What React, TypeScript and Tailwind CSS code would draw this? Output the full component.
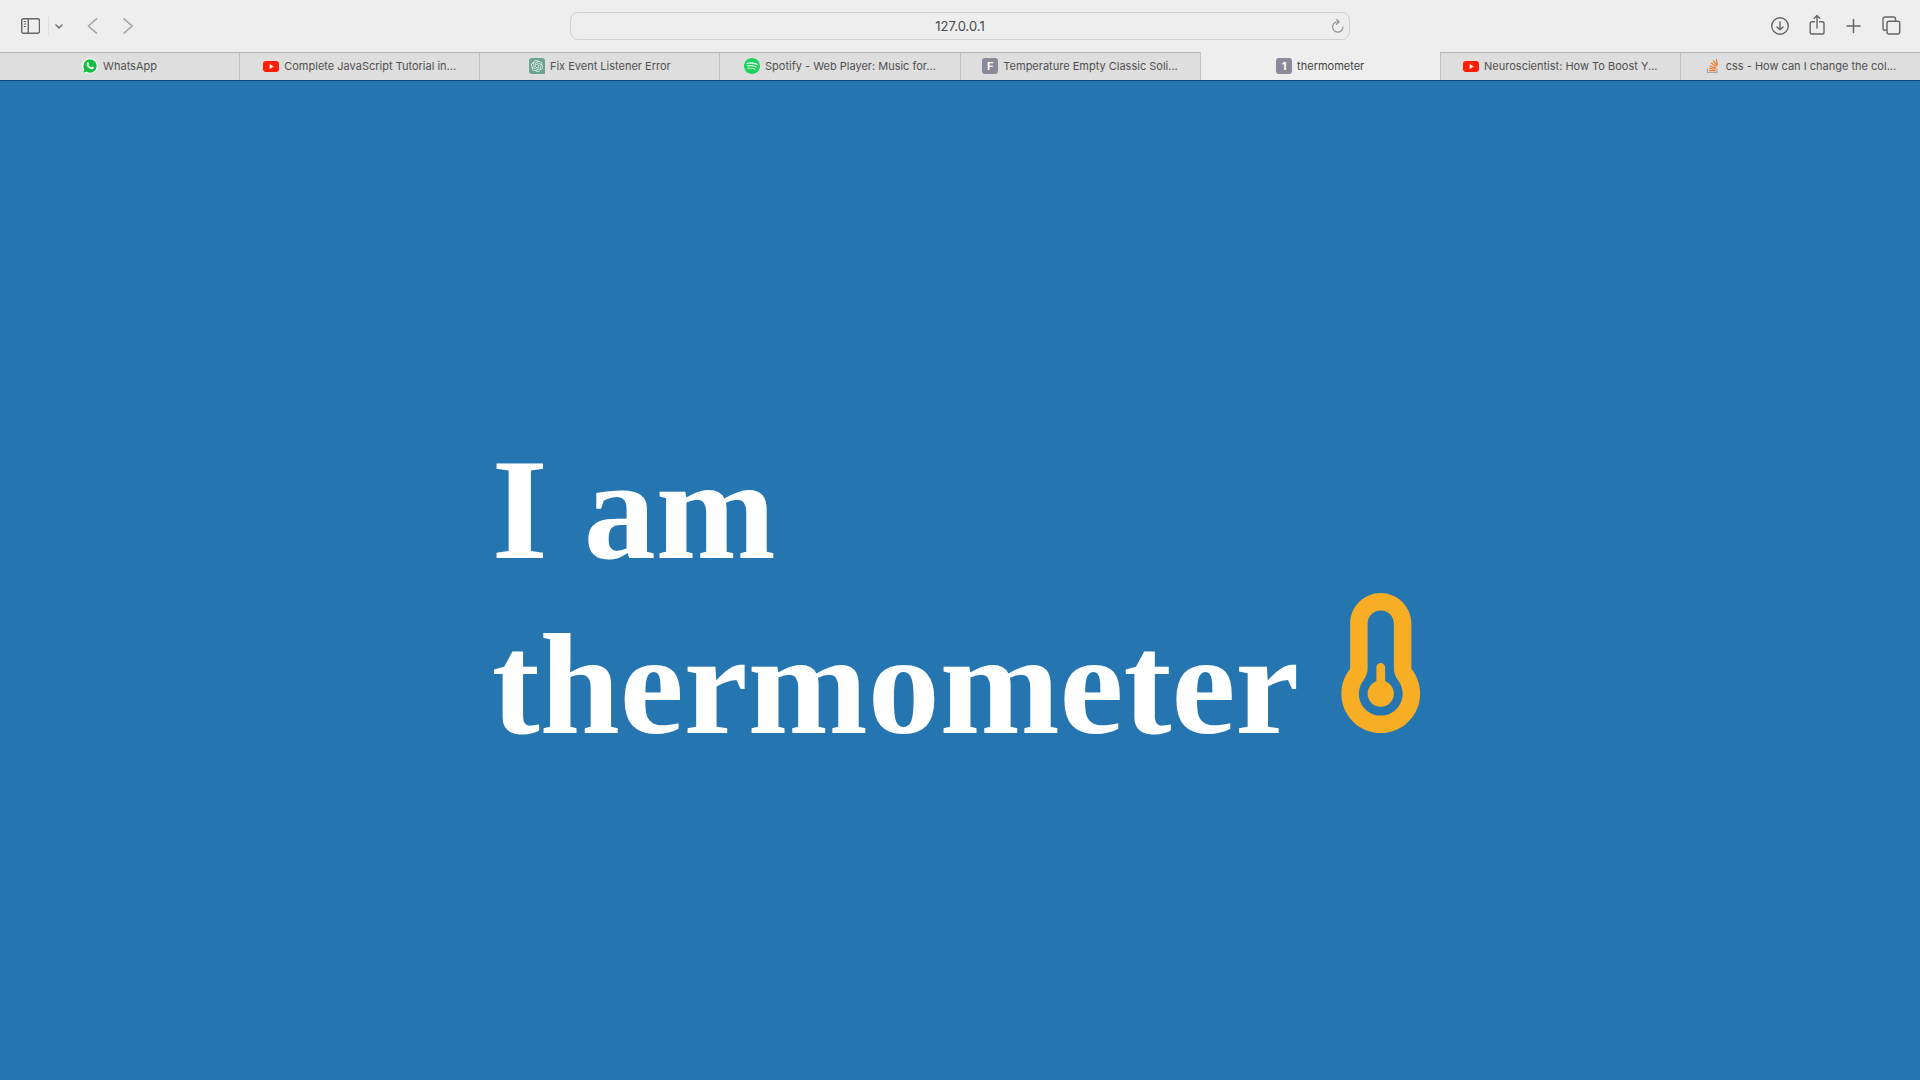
import React from "react";
import { SiOpenai, SiSpotify } from "react-icons/si";

function WhatsAppMark() {
  return (
    <svg viewBox="0 0 16 16" className="size-4" aria-hidden="true">
      <path d="M8 .2a7.600 7.600 0 0 1 0 15.400c-1.300 0-2.600-.3-3.600-.9L.3 15.800l1.100-4A7.600 7.600 0 0 1 8 .2Z" fill="#fff" />
      <circle cx="8" cy="8" r="6.700" fill="#12bd3f" />
      <path d="M1.200 14.800l1-3.600 2.600 2.600z" fill="#12bd3f" />
      <path
        d="M5.400 4.300c.5-.5.9-.4 1.100.1l.5 1.200c.1.4-.5.9-.6 1.200.5 1.200 1.500 2 2.700 2.600.4 0 .8-.9 1.100-.9l1.500.7c.4.3-.1 1.500-.8 1.800-1 .5-2.600.1-4-1C5.600 9 4.700 7.700 4.600 6.500c0-.9.3-1.700.8-2.200Z"
        fill="#fff"
      />
    </svg>
  );
}

function YouTubeMark() {
  return (
    <span className="flex h-[11px] w-4 items-center justify-center rounded-[3px] bg-[#ff1f00]">
      <svg viewBox="0 0 5 5" className="size-[5px]" aria-hidden="true">
        <path d="M.6.1v4.800L4.800 2.500z" fill="#fff" />
      </svg>
    </span>
  );
}

function ChatMark() {
  return (
    <span className="flex size-4 items-center justify-center rounded-tl-[3px] rounded-tr-[3px] rounded-bl-[3px] bg-[#6ba292]">
      <SiOpenai className="size-3 text-[#e4efeb]" />
    </span>
  );
}

function SpotifyMark() {
  return (
    <span className="flex size-4 items-center justify-center rounded-full bg-[#dff7e6]">
      <SiSpotify className="size-4 text-[#1ed05d]" />
    </span>
  );
}

function LetterMark({ letter }: { letter: string }) {
  return (
    <span className="flex size-4 items-center justify-center rounded-[3px] bg-[#8b8a99] text-[11px] leading-4 font-bold text-white">
      {letter}
    </span>
  );
}

function StackMark() {
  return (
    <svg viewBox="0 0 16 16" className="size-4" fill="none" aria-hidden="true">
      <path d="M2.500 10.500v4h9.500v-4" stroke="#a3a3a3" strokeWidth="1.100" />
      <path
        d="M4 12.600h6.500M4.200 10.400l6.400.7M4.700 8l6.200 1.800M6 5.100l5.400 3.300M8.200 2.700l4 5M11.300 1.100l1.200 5.900"
        stroke="#ee7c2b"
        strokeWidth="1.200"
      />
    </svg>
  );
}

const tabs: { title: string; mark: React.ReactNode; active?: boolean }[] = [
  { title: "WhatsApp", mark: <WhatsAppMark /> },
  { title: "Complete JavaScript Tutorial in...", mark: <YouTubeMark /> },
  { title: "Fix Event Listener Error", mark: <ChatMark /> },
  { title: "Spotify - Web Player: Music for...", mark: <SpotifyMark /> },
  { title: "Temperature Empty Classic Soli...", mark: <LetterMark letter="F" /> },
  { title: "thermometer", mark: <LetterMark letter="1" />, active: true },
  { title: "Neuroscientist: How To Boost Y...", mark: <YouTubeMark /> },
  { title: "css - How can I change the col...", mark: <StackMark /> },
];

function ToolButton({ label, className, children }: { label: string; className: string; children: React.ReactNode }) {
  return (
    <button type="button" aria-label={label} className={className}>
      {children}
    </button>
  );
}

function Toolbar() {
  return (
    <header className="grid h-[52px] grid-cols-[1fr_780px_1fr] items-center text-[#656565]">
      <div className="flex items-center pl-5">
        <ToolButton label="Show sidebar" className="flex size-5 items-center justify-center">
          <svg viewBox="0 0 20 20" className="size-5" fill="none" stroke="currentColor" strokeWidth="1.400">
            <rect x="1.700" y="2.700" width="17.800" height="14.600" rx="2" />
            <path d="M8.300 2.700v14.600" />
            <path d="M3.800 5.500h2.200M3.800 8h2.200M3.800 10.500h2.200" strokeWidth="1.100" />
          </svg>
        </ToolButton>
        <span className="ml-2 h-[18px] w-px bg-[#dedede]" />
        <ToolButton label="Sidebar options" className="ml-[5px] flex h-5 w-[10px] items-center justify-center">
          <svg viewBox="0 0 10 20" className="h-5 w-[10px]" fill="none" stroke="#777" strokeWidth="1.600" strokeLinecap="round" strokeLinejoin="round">
            <path d="M2 9l3 2.800L8 9" />
          </svg>
        </ToolButton>
        <ToolButton label="Back" className="ml-[22px] flex h-5 w-3 items-center justify-center">
          <svg viewBox="0 0 12 20" className="h-5 w-3" fill="none" stroke="#a5a5a5" strokeWidth="1.600" strokeLinecap="round" strokeLinejoin="round">
            <path d="M10.500 2.800L2.300 10l8.200 7.200" />
          </svg>
        </ToolButton>
        <ToolButton label="Forward" className="ml-6 flex h-5 w-3 items-center justify-center">
          <svg viewBox="0 0 12 20" className="h-5 w-3" fill="none" stroke="#a5a5a5" strokeWidth="1.600" strokeLinecap="round" strokeLinejoin="round">
            <path d="M2 2.800l8.200 7.200L2 17.200" />
          </svg>
        </ToolButton>
      </div>

      <div className="flex h-7 items-center rounded-lg border border-[#d0d0d0] pr-1 pl-5">
        <input
          aria-label="Address"
          defaultValue="127.0.0.1"
          className="min-w-0 flex-1 bg-transparent text-center text-[13px] leading-5 text-[#484848] outline-none"
        />
        <ToolButton label="Reload" className="flex size-4 items-center justify-center">
          <svg viewBox="0 0 16 16" className="size-4" fill="none" stroke="#929292" strokeWidth="1.200" strokeLinecap="round" strokeLinejoin="round">
            <path d="M9.300 3.800A5.200 5.200 0 1 0 14 9" />
            <path d="M7.600 1.400l2.600 2.400-2.600 2.500" />
          </svg>
        </ToolButton>
      </div>

      <div className="flex items-center justify-end gap-[17px] pr-[19px]">
        <ToolButton label="Downloads" className="flex size-5 items-center justify-center">
          <svg viewBox="0 0 20 20" className="size-5" fill="none" stroke="currentColor" strokeWidth="1.400" strokeLinecap="round" strokeLinejoin="round">
            <circle cx="10" cy="10" r="8.300" />
            <path d="M10 6v7.500M7 10.900l3 2.800 3-2.800" />
          </svg>
        </ToolButton>
        <ToolButton label="Share" className="flex size-5 items-center justify-center">
          <svg viewBox="0 0 20 20" className="size-5 overflow-visible" fill="none" stroke="currentColor" strokeWidth="1.400" strokeLinecap="round" strokeLinejoin="round">
            <path d="M7.500 5.700H5A1.800 1.800 0 0 0 3.200 7.500v8.700A1.800 1.800 0 0 0 5 18h10.200a1.800 1.800 0 0 0 1.800-1.800V7.500a1.800 1.800 0 0 0-1.800-1.800h-2.600" />
            <path d="M10 12V-.4M7.200 2.300L10-.5l2.800 2.800" />
          </svg>
        </ToolButton>
        <ToolButton label="New tab" className="flex size-5 items-center justify-center">
          <svg viewBox="0 0 20 20" className="size-5" fill="none" stroke="currentColor" strokeWidth="1.500" strokeLinecap="round">
            <path d="M9.500 3.500v13M3 10h13" />
          </svg>
        </ToolButton>
        <ToolButton label="Tab overview" className="flex size-5 items-center justify-center">
          <svg viewBox="0 0 20 20" className="size-5" fill="none" stroke="currentColor" strokeWidth="1.400">
            <path d="M5.500 14.200H4a2 2 0 0 1-2-2V3a2 2 0 0 1 2-2h8.500a2 2 0 0 1 2 2v1.700" />
            <rect x="6" y="5.200" width="12.700" height="12.800" rx="2" />
          </svg>
        </ToolButton>
      </div>
    </header>
  );
}

function TabBar() {
  return (
    <nav aria-label="Tabs" className="flex h-7">
      {tabs.map((tab, i) => (
        <button
          key={i}
          type="button"
          className={
            tab.active
              ? "flex min-w-0 flex-1 items-center justify-center gap-[5px] border-l border-[#c2c2c2] text-[#3f3f3f]"
              : "flex min-w-0 flex-1 items-center justify-center gap-[5px] border-t border-l border-t-[#b3b3b3] border-l-[#c2c2c2] bg-[#dedede] pb-px text-[#505050] first:border-l-0"
          }
        >
          {tab.mark}
          <span className="text-[11px] leading-4 whitespace-nowrap">{tab.title}</span>
        </button>
      ))}
    </nav>
  );
}

function Thermometer() {
  return (
    <svg viewBox="0 0 320 512" className="-mt-2 ml-1 inline-block h-[140px] align-baseline" fill="#f7ad24" role="img" aria-label="Thermometer">
      <path
        fillRule="evenodd"
        d="M160 64c-26.500 0-48 21.500-48 48V276.500c0 17.300-7.100 31.900-15.300 42.500C86.200 332.600 80 349.500 80 368c0 44.200 35.800 80 80 80s80-35.800 80-80c0-18.500-6.200-35.400-16.700-48.900c-8.200-10.600-15.300-25.200-15.300-42.500V112c0-26.500-21.500-48-48-48zM48 112C48 50.200 98.100 0 160 0s112 50.100 112 112V276.500c0 .1 .1 .3 .2 .6c.2 .6 .8 1.600 1.700 2.800c18.900 24.400 30.100 55 30.100 88.100c0 79.500-64.500 144-144 144S16 447.500 16 368c0-33.200 11.200-63.800 30.100-88.100c.9-1.200 1.500-2.200 1.700-2.800c.1-.3 .2-.5 .2-.6V112z"
      />
      <path d="M208 368c0 26.500-21.500 48-48 48s-48-21.500-48-48c0-20.900 13.400-38.700 32-45.300V272c0-8.800 7.200-16 16-16s16 7.200 16 16v50.700c18.600 6.600 32 24.400 32 45.300z" />
    </svg>
  );
}

export default function App() {
  return (
    <div className="flex min-h-screen flex-col bg-[#2575b0]">
      <div className="bg-[#eeeeee] font-['Inter','Liberation_Sans',sans-serif]">
        <Toolbar />
        <TabBar />
      </div>
      <main className="flex flex-1 items-center justify-center border-t border-[#084a80] pt-8">
        <h1 className="pr-1 font-['Liberation_Serif',serif] text-[144px] leading-[175px] font-bold text-white">
          I am
          <br />
          thermometer <Thermometer />
        </h1>
      </main>
    </div>
  );
}
